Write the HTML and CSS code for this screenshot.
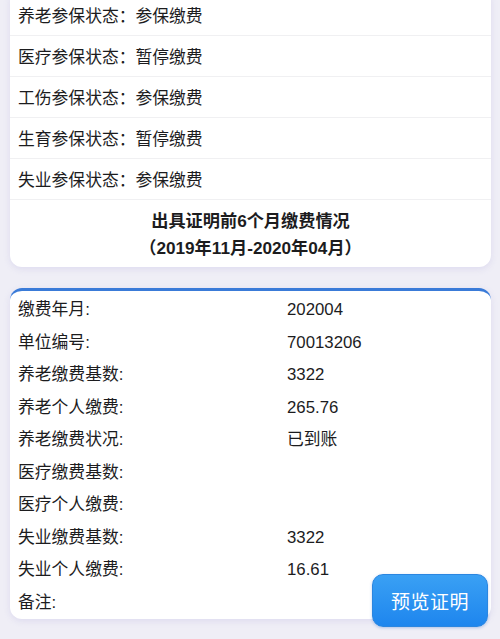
FILE: index.html
```html
<!DOCTYPE html>
<html lang="zh">
<head>
<meta charset="utf-8">
<link rel="stylesheet" href="styles.css">
</head>
<body>
<div class="page">
  <section class="card status-card">
    <div class="status-row">养老参保状态：参保缴费</div>
    <div class="status-row">医疗参保状态：暂停缴费</div>
    <div class="status-row">工伤参保状态：参保缴费</div>
    <div class="status-row">生育参保状态：暂停缴费</div>
    <div class="status-row">失业参保状态：参保缴费</div>
    <div class="title">
      <div>出具证明前6个月缴费情况</div>
      <div>（2019年11月-2020年04月）</div>
    </div>
  </section>

  <section class="card detail-card">
    <div class="detail-row"><span class="label">缴费年月:</span><span class="value">202004</span></div>
    <div class="detail-row"><span class="label">单位编号:</span><span class="value">70013206</span></div>
    <div class="detail-row"><span class="label">养老缴费基数:</span><span class="value">3322</span></div>
    <div class="detail-row"><span class="label">养老个人缴费:</span><span class="value">265.76</span></div>
    <div class="detail-row"><span class="label">养老缴费状况:</span><span class="value">已到账</span></div>
    <div class="detail-row"><span class="label">医疗缴费基数:</span><span class="value"></span></div>
    <div class="detail-row"><span class="label">医疗个人缴费:</span><span class="value"></span></div>
    <div class="detail-row"><span class="label">失业缴费基数:</span><span class="value">3322</span></div>
    <div class="detail-row"><span class="label">失业个人缴费:</span><span class="value">16.61</span></div>
    <div class="detail-row"><span class="label">备注:</span><span class="value"></span></div>
  </section>

  <button class="preview-btn">预览证明</button>
</div>
</body>
</html>
```

FILE: styles.css
```css
html, body {
  margin: 0;
  padding: 0;
  background: #efeef6;
}
body {
  font-family: "Liberation Sans", "Noto Sans CJK SC", sans-serif;
  color: #1c1c1e;
  font-size: 16.8px;
}
.page {
  position: relative;
  width: 500px;
  height: 639px;
  overflow: hidden;
  padding: 0 9px 0 10px;
  box-sizing: border-box;
}
.card {
  background: #fff;
  border-radius: 12px;
  box-shadow: 0 2px 6px rgba(200, 196, 230, 0.45);
}
.status-card {
  margin-top: -5px;
  border-top-left-radius: 0;
  border-top-right-radius: 0;
}
.status-row {
  height: 41px;
  line-height: 44px;
  padding-left: 8px;
  border-bottom: 1px solid #f0f0f2;
  box-sizing: border-box;
}
.title {
  text-align: center;
  font-weight: bold;
  font-size: 17.2px;
  line-height: 26.5px;
  padding: 8px 0 6px;
}
.detail-card {
  margin-top: 21px;
  padding-top: 3px;
  border-top: 3px solid #3a7bd8;
}
.detail-row {
  display: flex;
  height: 32.5px;
  line-height: 32.5px;
  padding-left: 8px;
}
.label {
  width: 269px;
  flex: none;
}
.value {
  flex: 1;
}
.preview-btn {
  position: absolute;
  left: 372px;
  top: 574px;
  width: 116px;
  height: 53px;
  border: 1px solid #2b86e0;
  border-radius: 11px;
  background: linear-gradient(#3aa0f4, #1e86ee);
  color: #fff;
  font-family: "Noto Sans CJK SC", sans-serif;
  font-size: 19px;
  letter-spacing: 0.5px;
  box-shadow: 0 1px 3px rgba(30, 100, 200, 0.3);
}
```
